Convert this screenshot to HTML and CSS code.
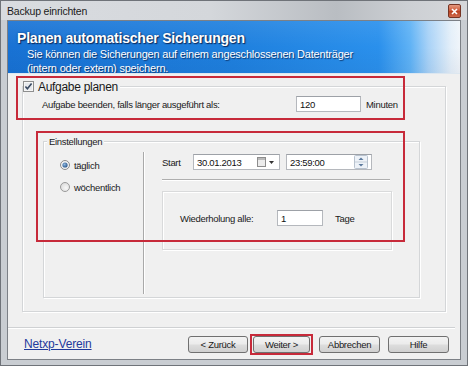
FILE: index.html
```html
<!DOCTYPE html>
<html lang="de">
<head>
<meta charset="utf-8">
<title>Backup einrichten</title>
<link rel="stylesheet" href="styles.css">
</head>
<body>
<div class="window">
  <div class="titlebar">
    <span class="title">Backup einrichten</span>
    <span class="close"><svg width="7" height="7" viewBox="0 0 7 7"><path d="M1 1 L6 6 M6 1 L1 6" stroke="#fff" stroke-width="1.6" fill="none"/></svg></span>
  </div>
  <div class="client">
    <div class="header">
      <div class="h-title">Planen automatischer Sicherungen</div>
      <div class="h-sub">Sie können die Sicherungen auf einem angeschlossenen Datenträger<br>(intern oder extern) speichern.</div>
    </div>

    <fieldset class="group outer">
      <legend class="outer-legend"><span class="legend-inner"><svg class="checkbox" width="11" height="11" viewBox="0 0 11 11"><rect x="0.5" y="0.5" width="10" height="10" fill="#f6f6f6" stroke="#8e8f8f"/><rect x="2" y="2" width="7" height="7" fill="#e6e9ed"/><path d="M2.4 5.4 L4.4 7.7 L8.6 2.6" stroke="#3a4a62" stroke-width="1.6" fill="none"/></svg><span>Aufgabe planen</span></span></legend>
      <div class="limit-row">
        <span class="limit-label">Aufgabe beenden, falls länger ausgeführt als:</span>
        <span class="textbox limit-box">120</span>
        <span class="unit">Minuten</span>
      </div>

      <fieldset class="group settings">
        <legend class="settings-legend">Einstellungen</legend>
        <div class="settings-body">
          <div class="radios">
            <div class="radio"><svg width="10" height="10" viewBox="0 0 10 10"><defs><radialGradient id="rdot" cx="0.4" cy="0.4" r="0.7"><stop offset="0" stop-color="#8fb8e0"/><stop offset="1" stop-color="#1d4a80"/></radialGradient></defs><circle cx="5" cy="5" r="4.5" fill="#f3f3f3" stroke="#8a8a8a"/><circle cx="5" cy="5" r="2.6" fill="url(#rdot)"/></svg><span>täglich</span></div>
            <div class="radio"><svg width="10" height="10" viewBox="0 0 10 10"><defs><radialGradient id="roff" cx="0.6" cy="0.6" r="0.7"><stop offset="0" stop-color="#f8f8f8"/><stop offset="1" stop-color="#d6d6d6"/></radialGradient></defs><circle cx="5" cy="5" r="4.5" fill="url(#roff)" stroke="#9a9a9a"/></svg><span>wöchentlich</span></div>
          </div>
          <div class="vsep"></div>
          <div class="schedule">
            <div class="start-row">
              <span class="start-label">Start</span>
              <span class="textbox date-box"><span>30.01.2013</span><svg class="push" width="19" height="10" viewBox="0 0 19 10"><rect x="0.5" y="0.5" width="8" height="9" fill="#ececec" stroke="#8d8d8d"/><rect x="1" y="1" width="7" height="2" fill="#b9b9b9"/><path d="M12 4 L17 4 L14.5 7 Z" fill="#333"/></svg></span>
              <span class="textbox time-box"><span>23:59:00</span><svg class="push" width="14" height="14" viewBox="0 0 14 14"><rect x="0.5" y="0.5" width="13" height="13" rx="1" fill="#edf2f8" stroke="#b8c2ce"/><line x1="1" y1="7" x2="13" y2="7" stroke="#c6cfd9"/><path d="M4.5 5 L9.5 5 L7 2.5 Z" fill="#5d7a9e"/><path d="M4.5 9 L9.5 9 L7 11.5 Z" fill="#5d7a9e"/></svg></span>
            </div>
            <div class="hsep"></div>
            <div class="repeat-box">
              <div class="repeat-row">
                <span class="repeat-label">Wiederholung alle:</span>
                <span class="textbox days-box">1</span>
                <span class="unit-days">Tage</span>
              </div>
            </div>
          </div>
        </div>
      </fieldset>
    </fieldset>

    <div class="footer-sep"></div>
    <div class="footer">
      <a class="link" href="#">Netxp-Verein</a>
      <div class="buttons">
        <button class="btn">&lt; Zurück</button>
        <span class="mark-btn"><button class="btn btn-next">Weiter &gt;</button></span>
        <button class="btn btn-wide">Abbrechen</button>
        <button class="btn btn-wide btn-help">Hilfe</button>
      </div>
    </div>

    <div class="mark mark-task"></div>
    <div class="mark mark-settings"></div>
  </div>
</div>
</body>
</html>
```

FILE: styles.css
```css
* { box-sizing: border-box; }
html, body { margin: 0; padding: 0; }
body {
  width: 468px;
  height: 366px;
  overflow: hidden;
  font-family: "Liberation Sans", Arial, sans-serif;
  font-size: 9.5px;
  letter-spacing: -0.3px;
  color: #1a1a1a;
  background: #c9cdd2;
}

.window {
  width: 468px;
  height: 366px;
  border: 1px solid #6f7379;
  background: #c9cdd2;
  padding: 0 6px 5px 6px;
  display: flex;
  flex-direction: column;
}

.titlebar {
  height: 19px;
  flex: none;
  margin: 0 -6px;
  padding: 0 6px;
  display: flex;
  align-items: center;
  justify-content: space-between;
  background: linear-gradient(90deg, #d9dce0 0%, #d4d7db 45%, #b9bdc2 72%, #cdd0d4 88%, #d6d8db 100%);
}
.title {
  font-size: 10.5px;
  letter-spacing: -0.2px;
  color: #1b1b1b;
  padding-top: 1px;
}
.close {
  width: 13px;
  height: 14px;
  margin-top: 1px;
  border: 1px solid #763424;
  border-radius: 2px;
  background: linear-gradient(#e4997f, #cc5534 50%, #b8401f 51%, #d06a4b);
  display: flex;
  align-items: center;
  justify-content: center;
}

.client {
  flex: 1;
  min-height: 0;
  position: relative;
  background: #f0f0f0;
  border: 1px solid #7c8086;
  display: flex;
  flex-direction: column;
}

/* header */
.header {
  height: 53px;
  flex: none;
  overflow: hidden;
  padding: 9px 0 0 9px;
  color: #fff;
  border-bottom: 1px solid #dde7f0;
  background:
    linear-gradient(180deg, rgba(255,255,255,0.08) 0%, rgba(255,255,255,0) 50%, rgba(0,0,40,0.04) 100%),
    linear-gradient(90deg, #1872d4 0%, #1f80de 50%, #2a90ec 82%, #5fb2f5 89%, #a8d2f7 93%, #e4eff9 98%, #f0f5fa 100%);
}
.h-title {
  font-size: 14px;
  font-weight: bold;
  line-height: 16px;
  letter-spacing: -0.2px;
  text-shadow: 1px 1px 1px #0b2a5c, 0 0 2px #0d3b7c;
}
.h-sub {
  font-size: 11px;
  line-height: 14px;
  letter-spacing: -0.2px;
  margin: 1px 0 0 10px;
  text-shadow: 1px 1px 1px #0d3266;
}

/* group boxes */
.group {
  margin: 0;
  padding: 0;
  min-inline-size: 0;
  border: 1px solid #d4d6d8;
  box-shadow: inset 1px 1px 0 #fff, 1px 1px 0 #fff;
}
.outer {
  flex: none;
  width: 424px;
  margin: 5px 0 0 14px;
  padding: 2px 0 13px 0;
}
.outer-legend {
  margin: 0;
  padding: 0 2px 0 0;
  background: #f0f0f0;
}
.legend-inner {
  display: flex;
  align-items: center;
  height: 15px;
  font-size: 12px;
  letter-spacing: -0.3px;
}
.checkbox { margin-right: 4px; flex: none; }

.limit-row {
  display: flex;
  align-items: center;
  height: 16px;
  margin-left: 19px;
}
.limit-label { width: 254px; }
.limit-box { width: 65px; }
.unit { margin-left: 5px; }

.settings {
  width: 377px;
  margin: 23px 0 0 20px;
}
.settings-legend {
  margin-left: 3px;
  padding: 0 2px;
  height: 13px;
  line-height: 13px;
  background: #f0f0f0;
}
.settings-body {
  height: 149px;
  display: flex;
}
.radios {
  width: 99px;
  padding: 10px 0 0 16px;
  display: flex;
  flex-direction: column;
  gap: 8px;
}
.radio {
  display: flex;
  align-items: center;
  height: 14px;
}
.radio svg { margin-right: 4px; flex: none; }
.vsep {
  width: 1px;
  margin: 4px 0 3px 0;
  background: #a9a9a9;
  box-shadow: 1px 0 0 #fff;
}
.schedule {
  padding-left: 18px;
  display: flex;
  flex-direction: column;
  align-items: flex-start;
}
.start-row {
  margin-top: 6px;
  height: 16px;
  display: flex;
  align-items: center;
}
.start-label { width: 31px; }
.date-box { width: 87px; margin-right: 6px; padding-right: 3px; }
.time-box { width: 86px; padding-left: 2px; padding-right: 1px; }
.push { margin-left: auto; flex: none; }

.hsep {
  width: 228px;
  height: 2px;
  margin-top: 9px;
  border-top: 1px solid #aeaeae;
  border-bottom: 1px solid #fff;
}
.repeat-box {
  width: 230px;
  height: 59px;
  margin-top: 10px;
  padding: 18px 0 0 17px;
  border: 1px solid #d9dadb;
  box-shadow: inset 1px 1px 0 #fff, 1px 1px 0 #fff;
}
.repeat-row {
  display: flex;
  align-items: center;
  height: 16px;
}
.repeat-label { width: 97px; }
.days-box { width: 46px; }
.unit-days { margin-left: 12px; }

/* text boxes */
.textbox {
  display: inline-flex;
  align-items: center;
  height: 16px;
  padding: 0 3px;
  background: #fff;
  border: 1px solid #b5b8bd;
  border-top-color: #9da1a7;
  color: #111;
}

/* footer */
.footer-sep {
  flex: none;
  height: 2px;
  margin: 15px 5px 0 0;
  border-top: 1px solid #cfd1d3;
  border-bottom: 1px solid #fff;
}
.footer {
  flex: none;
  height: 30px;
  padding: 0 11px 0 16px;
  display: flex;
  align-items: center;
}
.link {
  font-size: 12px;
  letter-spacing: -0.15px;
  color: #1f3a9c;
  text-decoration: underline;
}
.buttons {
  margin-left: auto;
  display: flex;
  align-items: center;
}
.btn {
  width: 60px;
  height: 17px;
  padding: 0;
  margin: 0;
  font-family: "Liberation Sans", Arial, sans-serif;
  font-size: 9.5px;
  letter-spacing: -0.3px;
  color: #1a1a1a;
  border: 1px solid #707070;
  border-radius: 3px;
  background: linear-gradient(#f3f3f3 0%, #ebebeb 48%, #dddddd 52%, #d0d0d0 100%);
}
.mark-btn {
  display: flex;
  align-items: center;
  height: 21px;
  margin-left: 2px;
  padding: 0 1px;
  border: 2px solid #c72a3a;
}
.btn-next { width: 57px; }
.btn-wide { width: 61px; margin-left: 6px; }
.btn-help { margin-left: 8px; }

/* red annotation frames */
.mark {
  position: absolute;
  border: 2px solid #c72a3a;
  pointer-events: none;
}
.mark-task { left: 8px; top: 55px; width: 389px; height: 44px; }
.mark-settings { left: 28px; top: 110px; width: 369px; height: 111px; }
```
